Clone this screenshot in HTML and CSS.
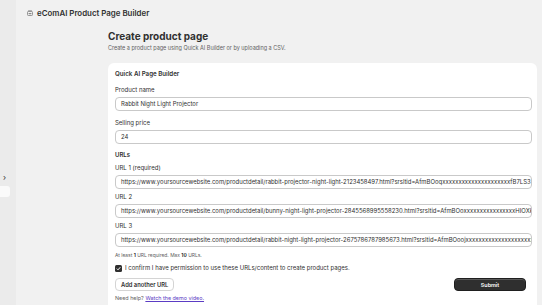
FILE: index.html
```html
<!DOCTYPE html>
<html lang="en">
<head>
    <meta charset="UTF-8">
    <meta name="viewport" content="width=device-width, initial-scale=1.0">
    <title>eComAI Product Page Builder</title>
    <link rel="stylesheet" href="styles.css">
</head>
<body>
    <aside class="sidebar">
        <span class="side-arrow">&#8250;</span>
        <div class="side-item"></div>
    </aside>

    <main class="main">
        <div class="topbar">
            <svg class="app-icon" width="6" height="6" viewBox="0 0 6 6">
                <rect x="0.5" y="1.5" width="5" height="4" rx="0.8" fill="none" stroke="#8a8a8a" stroke-width="0.9"/>
                <path d="M1.5 1.5 V1 a1.5 1 0 0 1 3 0 V1.5" fill="none" stroke="#8a8a8a" stroke-width="0.9"/>
                <rect x="1.6" y="3" width="2.8" height="1.2" fill="#8a8a8a"/>
            </svg>
            <span class="app-name">eComAI Product Page Builder</span>
        </div>

        <div class="page">
            <h1 class="page-title">Create product page</h1>
            <p class="page-subtitle">Create a product page using Quick AI Builder or by uploading a CSV.</p>

            <div class="card">
                <h2 class="card-title">Quick AI Page Builder</h2>

                <div class="field">
                    <label class="label">Product name</label>
                    <div class="input">Rabbit Night Light Projector</div>
                </div>

                <div class="field last">
                    <label class="label">Selling price</label>
                    <div class="input">24</div>
                </div>

                <h3 class="section-title">URLs</h3>

                <div class="field tight">
                    <label class="label">URL 1 (required)</label>
                    <div class="input">https://www.yoursourcewebsite.com/productdetail/rabbit-projector-night-light-2123458497.html?srsltid=AfmBOoqxxxxxxxxxxxxxxxxxxxxxfB7LS3</div>
                </div>
                <div class="field tight">
                    <label class="label">URL 2</label>
                    <div class="input">https://www.yoursourcewebsite.com/productdetail/bunny-night-light-projector-2845568995558230.html?srsltid=AfmBOoxxxxxxxxxxxxxxxxHIOXk</div>
                </div>
                <div class="field tight">
                    <label class="label">URL 3</label>
                    <div class="input">https://www.yoursourcewebsite.com/productdetail/rabbit-night-light-projector-2675786787985673.html?srsltid=AfmBOoojxxxxxxxxxxxxxxxxxxxxxxx</div>
                </div>

                <p class="help">At least <b>1</b> URL required. Max <b>10</b> URLs.</p>

                <div class="check-row">
                    <span class="checkbox">
                        <svg width="7" height="7" viewBox="0 0 7 7"><path d="M1.8 3.6 L3 4.8 L5.3 2.2" fill="none" stroke="#fff" stroke-width="1"/></svg>
                    </span>
                    <span class="check-label">I confirm I have permission to use these URLs/content to create product pages.</span>
                </div>

                <div class="actions">
                    <button class="btn">Add another URL</button>
                    <button class="btn btn-primary">Submit</button>
                </div>

                <p class="need-help">Need help? <a href="#">Watch the demo video.</a></p>
            </div>
        </div>
    </main>
</body>
</html>
```

FILE: styles.css
```css
* {
    box-sizing: border-box;
    font-family: 'Inter', 'Liberation Sans', sans-serif;
}

body {
    margin: 0;
    background-color: #f1f1f1;
    color: #303030;
    display: flex;
    height: 305px;
    overflow: hidden;
}

.sidebar {
    width: 16px;
    flex-shrink: 0;
    background-color: #ebebeb;
    padding-top: 172px;
}

.side-arrow {
    display: block;
    font-size: 8px;
    line-height: 10px;
    padding-left: 3px;
    color: #303030;
}

.side-item {
    margin-top: 4px;
    width: 10px;
    height: 11px;
    background-color: #fafafa;
    border-radius: 0 3px 3px 0;
}

.main {
    flex: 1;
    min-width: 0;
}

.topbar {
    height: 26px;
    display: flex;
    align-items: center;
    gap: 4px;
    padding-left: 11px;
}

.app-icon {
    display: block;
}

.app-name {
    font-size: 7.9px;
    font-weight: 600;
    color: #303030;
}

.page {
    padding-left: 92px;
    padding-right: 5px;
}

.page-title {
    margin: 4px 0 0;
    font-size: 10px;
    line-height: 13px;
    font-weight: 700;
}

.page-subtitle {
    margin: 1px 0 0;
    font-size: 5.5px;
    line-height: 8px;
    color: #616161;
}

.card {
    margin-top: 11px;
    background-color: #fff;
    border-radius: 6px;
    padding: 7px 5px 10px 7px;
    box-shadow: 0 1px 0 rgba(0, 0, 0, 0.06);
}

.card-title {
    margin: 0 0 8px;
    font-size: 6.2px;
    line-height: 8px;
    font-weight: 600;
}

.field {
    margin-bottom: 8px;
}

.field.last {
    margin-bottom: 7px;
}

.field.tight {
    margin-bottom: 4px;
}

.label {
    display: block;
    font-size: 6px;
    line-height: 8px;
    margin-bottom: 3px;
}

.input {
    height: 14px;
    border: 1px solid #c9c9c9;
    border-radius: 4px;
    padding: 0 5px;
    font-size: 5.95px;
    line-height: 12px;
    white-space: nowrap;
    overflow: hidden;
}

.section-title {
    margin: 0 0 5px;
    font-size: 6px;
    line-height: 8px;
    font-weight: 600;
}

.help {
    margin: 4px 0 5px;
    font-size: 4.9px;
    line-height: 8px;
    color: #616161;
}

.help b {
    color: #303030;
}

.check-row {
    display: flex;
    align-items: center;
    gap: 3px;
    height: 8px;
}

.checkbox {
    width: 7px;
    height: 7px;
    border-radius: 1.5px;
    background-color: #303030;
    display: flex;
}

.check-label {
    font-size: 6px;
    line-height: 8px;
}

.actions {
    display: flex;
    justify-content: space-between;
    align-items: center;
    margin-top: 6px;
    padding-right: 6px;
}

.btn {
    height: 13px;
    padding: 0 5px;
    font-size: 5.8px;
    font-weight: 600;
    color: #303030;
    background-color: #fff;
    border: 1px solid #d4d4d4;
    border-radius: 4px;
}

.btn-primary {
    width: 72px;
    font-size: 5.4px;
    color: #fff;
    background-color: #2f2f2f;
    border-color: #1f1f1f;
    box-shadow: inset 0 1px 0 rgba(255, 255, 255, 0.2);
}

.need-help {
    margin: 3px 0 0;
    font-size: 5.4px;
    line-height: 8px;
    color: #616161;
}

.need-help a {
    color: #5b3cc4;
}
```
